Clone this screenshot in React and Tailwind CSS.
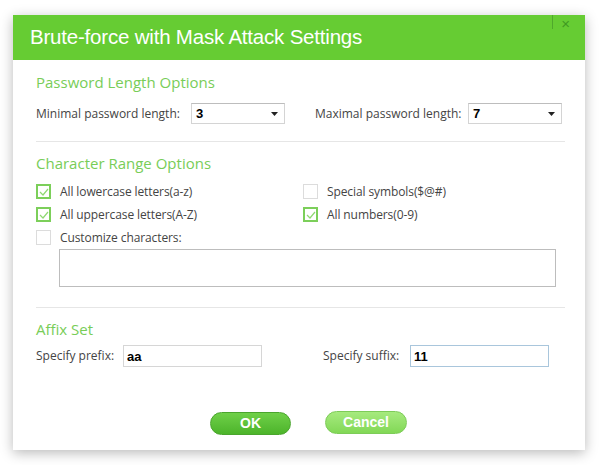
import { useState } from "react";

function Check({ checked, label }) {
  return (
    <label className="flex items-center gap-[9px] h-[23px] cursor-pointer">
      <span
        className={
          "w-[15px] h-[15px] flex items-center justify-center bg-white " +
          (checked ? "border-2 border-[#7ccf5a]" : "border border-[#dcdcdc]")
        }
      >
        {checked && (
          <svg width="10" height="8" viewBox="0 0 10 8" fill="none">
            <path d="M1 4l3 3 5-6" stroke="#8fd872" strokeWidth="1.2" />
          </svg>
        )}
      </span>
      <span className="text-[12px] text-[#444] whitespace-nowrap tracking-[-0.1px]">{label}</span>
    </label>
  );
}

function Select({ value }) {
  return (
    <div className="w-[94px] h-[21px] shrink-0 border border-[#d4d4d4] border-t-[#bdbdbd] flex items-center justify-between pl-[4px] pr-[6px] bg-white">
      <span className="text-[13px] font-bold text-black font-['Liberation_Sans',sans-serif]">{value}</span>
      <svg width="7" height="4" viewBox="0 0 7 4">
        <path d="M0 0h7L3.5 4z" fill="#222" />
      </svg>
    </div>
  );
}

export default function App() {
  const [prefix, setPrefix] = useState("aa");
  const [suffix, setSuffix] = useState("11");

  return (
    <div className="w-[600px] h-[465px] bg-white pt-[15px] pl-[13px] font-['Open_Sans','Noto_Sans',sans-serif]">
      <div className="w-[572px] h-[435px] bg-white shadow-[0_3px_12px_rgba(0,0,0,0.28)] flex flex-col">
        <div className="h-[45px] shrink-0 bg-[#66cc33] flex items-center justify-between pl-[17px] relative">
          <h1 className="text-[20.5px] text-white font-['Liberation_Sans',sans-serif] tracking-[-0.2px]">
            Brute-force with Mask Attack Settings
          </h1>
          <div className="absolute right-[32px] top-0 w-px h-[14px] bg-[#4fa82c]" />
          <span className="absolute right-[15px] top-[1px] text-[15px] leading-[16px] text-[#3f9a22] font-['Liberation_Sans',sans-serif]">
            ×
          </span>
        </div>

        <div className="px-[23px] flex flex-col">
          <h2 className="mt-[13px] h-[18px] leading-[18px] text-[15px] text-[#78cd58]">Password Length Options</h2>
          <div className="mt-[12px] flex items-center">
            <span className="text-[12px] text-[#444] w-[157px] whitespace-nowrap">Minimal password length:</span>
            <Select value="3" />
            <span className="ml-[30px] text-[12px] text-[#444] w-[155px] whitespace-nowrap">Maximal password length:</span>
            <Select value="7" />
          </div>
          <div className="mt-[17px] h-px bg-[#e6e6e6] w-[529px]" />

          <h2 className="mt-[12px] h-[18px] leading-[18px] text-[15px] text-[#78cd58]">Character Range Options</h2>
          <div className="mt-[8px] grid grid-cols-[267px_1fr]">
            <Check checked label="All lowercase letters(a-z)" />
            <Check label="Special symbols($@#)" />
            <Check checked label="All uppercase letters(A-Z)" />
            <Check checked label="All numbers(0-9)" />
            <Check label="Customize characters:" />
          </div>
          <textarea className="ml-[23px] w-[497px] h-[38px] border border-[#bdbdbd] resize-none outline-none" />
          <div className="mt-[20px] h-px bg-[#e6e6e6] w-[529px]" />

          <h2 className="mt-[12px] h-[18px] leading-[18px] text-[15px] text-[#78cd58]">Affix Set</h2>
          <div className="mt-[7px] flex items-center">
            <span className="text-[12px] text-[#444] w-[87px] whitespace-nowrap">Specify prefix:</span>
            <input
              value={prefix}
              onChange={(e) => setPrefix(e.target.value)}
              className="w-[139px] h-[22px] border border-[#d6d6d6] pl-[3px] text-[13px] font-bold text-black font-['Liberation_Sans',sans-serif] outline-none"
            />
            <span className="ml-[61px] text-[12px] text-[#444] w-[87px] whitespace-nowrap">Specify suffix:</span>
            <input
              value={suffix}
              onChange={(e) => setSuffix(e.target.value)}
              className="w-[139px] h-[22px] border border-[#a9c6dc] pl-[3px] text-[13px] font-bold text-black font-['Liberation_Sans',sans-serif] outline-none"
            />
          </div>

          <div className="mt-[45px] flex pl-[174px] gap-[34px]">
            <button className="w-[81px] h-[23px] rounded-full bg-gradient-to-b from-[#6fd048] to-[#4cb42a] border border-[#4aa52d] text-white text-[14px] font-bold font-['Liberation_Sans',sans-serif]">
              OK
            </button>
            <button className="w-[82px] h-[23px] -mt-px rounded-full bg-gradient-to-b from-[#a6ea7e] to-[#82d856] border border-[#7dcc58] text-white text-[14px] font-bold font-['Liberation_Sans',sans-serif]">
              Cancel
            </button>
          </div>
        </div>
      </div>
    </div>
  );
}
